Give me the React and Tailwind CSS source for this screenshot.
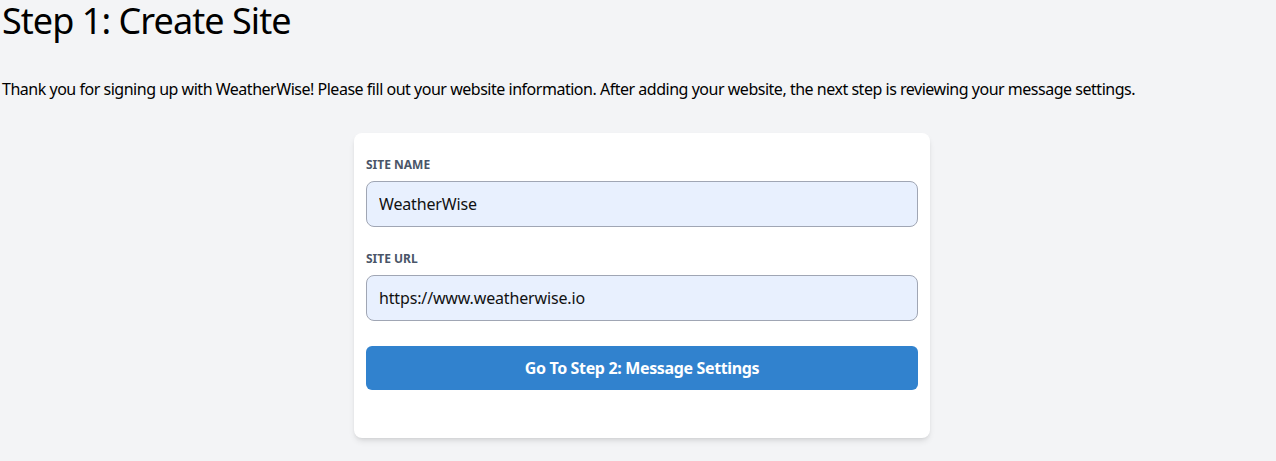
import React from 'react';

const Field = ({ label, value, className = '' }) => (
  <div className={className}>
    <label className="block text-xs font-bold uppercase text-[#4a5568] leading-4 mb-2">{label}</label>
    <input
      readOnly
      value={value}
      className="block w-full h-[46px] rounded-lg border border-[#a0a6b4] bg-[#e8f0fe] px-3 text-base tracking-[-0.15px] text-[#111] outline-none"
    />
  </div>
);

export default function App() {
  return (
    <div className="min-h-[461px] bg-[#f3f4f6] pt-px text-black font-['Segoe_UI','Noto_Sans',sans-serif]">
      <h1 className="text-4xl leading-10 pl-0.5 tracking-[-0.95px]">Step 1: Create Site</h1>
      <p className="mt-9 pl-0.5 text-base leading-6 tracking-[-0.48px]">
        Thank you for signing up with WeatherWise! Please fill out your website information. After adding your website, the next step is reviewing your message settings.
      </p>
      <div className="mx-auto mt-8 w-[576px] translate-x-[4px] rounded-lg bg-white px-3 pt-6 pb-12 shadow-md">
        <Field label="Site Name" value="WeatherWise" />
        <Field label="Site URL" value="https://www.weatherwise.io" className="mt-6" />
        <button className="mt-[25px] block w-full h-11 rounded-md bg-[#3182ce] text-base font-bold tracking-[-0.35px] text-white">
          Go To Step 2: Message Settings
        </button>
      </div>
    </div>
  );
}
